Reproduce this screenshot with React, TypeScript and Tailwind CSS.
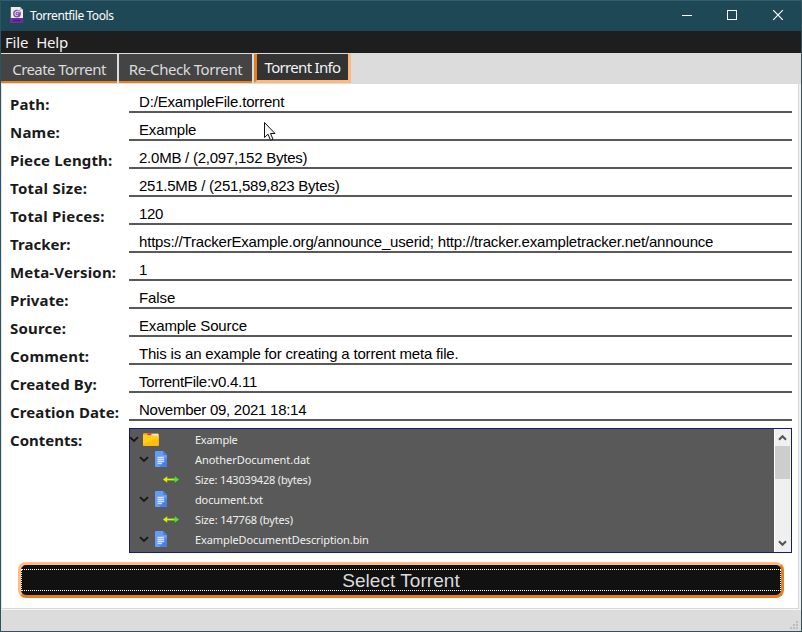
import React from "react";

const ui = "font-['Noto_Sans','Open_Sans',sans-serif]";
const arial = "font-['Liberation_Sans',Arial,sans-serif]";

const fields = [
  { label: "Path:", value: "D:/ExampleFile.torrent", ls: "tracking-[0.15px]", vs: "tracking-[-0.18px]" },
  { label: "Name:", value: "Example", ls: "tracking-[0.2px]", vs: "tracking-[-0.15px]" },
  { label: "Piece Length:", value: "2.0MB / (2,097,152 Bytes)", ls: "tracking-[0.15px]", vs: "tracking-[-0.24px]" },
  { label: "Total Size:", value: "251.5MB / (251,589,823 Bytes)", ls: "tracking-[0.27px]", vs: "tracking-[-0.25px]" },
  { label: "Total Pieces:", value: "120", ls: "tracking-[0.2px]", vs: "tracking-[-0.3px]" },
  { label: "Tracker:", value: "https://TrackerExample.org/announce_userid; http://tracker.exampletracker.net/announce", ls: "tracking-[0.05px]", vs: "tracking-[-0.19px]" },
  { label: "Meta-Version:", value: "1", ls: "tracking-[0.18px]", vs: "tracking-[0px]" },
  { label: "Private:", value: "False", ls: "tracking-[0.12px]", vs: "tracking-[-0.1px]" },
  { label: "Source:", value: "Example Source", ls: "tracking-[0.2px]", vs: "tracking-[-0.15px]" },
  { label: "Comment:", value: "This is an example for creating a torrent meta file.", ls: "tracking-[0.2px]", vs: "tracking-[-0.19px]" },
  { label: "Created By:", value: "TorrentFile:v0.4.11", ls: "tracking-[0.12px]", vs: "tracking-[-0.27px]" },
  { label: "Creation Date:", value: "November 09, 2021 18:14", ls: "tracking-[0.1px]", vs: "tracking-[-0.27px]" },
];

const tree = [
  { kind: "folder", text: "Example", ts: "tracking-[-0.25px]" },
  { kind: "file", text: "AnotherDocument.dat", ts: "tracking-[-0.05px]" },
  { kind: "size", text: "Size: 143039428 (bytes)", ts: "tracking-[-0.17px]" },
  { kind: "file", text: "document.txt", ts: "tracking-[-0.14px]" },
  { kind: "size", text: "Size: 147768 (bytes)", ts: "tracking-[-0.15px]" },
  { kind: "file", text: "ExampleDocumentDescription.bin", ts: "tracking-[-0.1px]" },
];

function AppIcon() {
  return (
    <svg width="14" height="17" viewBox="0 0 14 17" className="block">
      <path d="M0.8 0H10L13 3V16H0.8Z" fill="#f1ede6" />
      <path d="M10 0L13 3H10Z" fill="#c9c4cf" />
      <circle cx="7" cy="6.6" r="3.9" fill="#7a52a8" />
      <path d="M9.8 5.2C8.5 3.4 5.6 4.1 5 6.2C4.7 8.2 6.5 9.2 7.8 8.4" fill="none" stroke="#e3d8ee" strokeWidth="1.1" />
      <circle cx="7.5" cy="6.5" r="1" fill="#cdb9e0" />
      <rect x="0.2" y="11" width="13" height="5" fill="#6c2fa0" />
      <path d="M3 13.5H10.5" stroke="#471c73" strokeWidth="1.2" />
    </svg>
  );
}

function TreeChevron() {
  return (
    <svg width="10" height="7" viewBox="0 0 10 7" className="block shrink-0">
      <path d="M1 1.2L5 5L9 1.2" fill="none" stroke="#161616" strokeWidth="1.8" />
    </svg>
  );
}

function FolderIcon() {
  return (
    <svg width="16" height="13" viewBox="0 0 16 13" className="block">
      <path d="M0 1.2Q0 0.3 1 0.3H5L6 1H15Q16 1 16 2V12Q16 12.7 15 12.7H1Q0 12.7 0 12Z" fill="#ffb400" />
      <path d="M5 0.6H15.2V7H5Z" fill="#f9e6c6" />
      <path d="M4 0.6H8.4V2.4H5Z" fill="#ee2255" />
      <path d="M0 2H4.6L6 2.4H14.6V12.7H1Q0 12.7 0 12Z" fill="#ffcf1a" />
      <path d="M0 11L14.6 5H16V12Q16 12.7 15 12.7H1Q0 12.7 0 12Z" fill="#ffb50c" opacity="0.7" />
    </svg>
  );
}

function FileIcon() {
  return (
    <svg width="12" height="16" viewBox="0 0 12 16" className="block">
      <path d="M1 0H8L12 4V15Q12 16 11 16H1Q0 16 0 15V1Q0 0 1 0Z" fill="#659cf6" />
      <path d="M8 0L12 4H9Q8 4 8 3Z" fill="#4a7fe0" />
      <path d="M9.3 6L12 8.5V15Q12 16 11 16H6L2.7 13Z" fill="#4a80e6" />
      <path d="M2.5 6.5H9.3M2.5 8.5H9.3M2.5 10.5H9.3M2.5 12.5H7" stroke="#d3e2ff" strokeWidth="1.4" />
    </svg>
  );
}

function SizeIcon() {
  return (
    <svg width="16" height="7" viewBox="0 0 16 7" className="block">
      <path d="M2 3.5H11" stroke="#cdf500" strokeWidth="1.8" />
      <path d="M10 3.5H14" stroke="#7cf020" strokeWidth="1.8" />
      <path d="M0 3.5L4.2 0.3V6.7Z" fill="#d2f200" />
      <path d="M16 3.5L11.8 0.3V6.7Z" fill="#4be62a" />
    </svg>
  );
}

function TreeRow({ kind, text, ts }: { kind: string; text: string; ts: string }) {
  return (
    <div className="flex h-5 items-center">
      {kind === "folder" && (
        <div className="flex w-[65px] items-center gap-[3px]">
          <div className="-mt-[2px] -ml-px"><TreeChevron /></div>
          <div className="-mt-[2px] ml-[1px]"><FolderIcon /></div>
        </div>
      )}
      {kind === "file" && (
        <div className="flex w-[65px] items-center gap-[5px] pl-[9px]">
          <div className="-mt-[2px]"><TreeChevron /></div>
          <div className="-mt-[2px] ml-px"><FileIcon /></div>
        </div>
      )}
      {kind === "size" && (
        <div className="-mt-[2px] flex w-[65px] items-center pl-[33px]">
          <SizeIcon />
        </div>
      )}
      <span className={`text-[11px] leading-5 text-[#f0f0f0] ${ts}`}>{text}</span>
    </div>
  );
}

export default function App() {
  return (
    <div className={`relative flex h-[632px] w-[802px] flex-col overflow-hidden border border-t-[#315c69] border-r-[#35535c] border-b-[#35535c] border-l-[#2b5364] bg-[#dcdcdc] ${ui}`}>
      <header className="flex h-[30px] shrink-0 items-center bg-[#1f4856] pl-[9px]">
        <div className="-mt-[2px]"><AppIcon /></div>
        <span className="ml-[6px] text-[12px] leading-[30px] tracking-[-0.42px] text-white">Torrentfile Tools</span>
        <div className="ml-auto flex items-center">
          <svg width="120" height="30" viewBox="0 0 120 30" className="block" fill="none" stroke="#ffffff">
            <path d="M1 14.5H11M46.5 9.5H55.5V18.5H46.5Z" shapeRendering="crispEdges" />
            <path d="M92.2 9.2L101.8 18.8M101.8 9.2L92.2 18.8" strokeWidth="1.2" />
          </svg>
        </div>
      </header>

      <nav className="flex h-[22px] shrink-0 items-center gap-[8px] bg-[#1e1e1e] pl-[4px] text-[15px] leading-[22px] text-[#f2f2f2]">
        <span className="tracking-[-0.2px]">File</span>
        <span className="tracking-[-0.2px]">Help</span>
      </nav>

      <div className="flex h-[31px] shrink-0 items-start pt-px text-[15px]">
        <div className="mr-[2px] h-[29px] w-[116px] border-b-2 border-[#e67e22] bg-[#444444] text-center leading-[30px] text-[#dcdcdc]">
          <span className="tracking-[-0.58px]">Create Torrent</span>
        </div>
        <div className="mr-[2px] h-[29px] w-[133px] border-b-2 border-[#e67e22] bg-[#444444] text-center leading-[30px] text-[#dcdcdc]">
          <span className="tracking-[-0.45px]">Re-Check Torrent</span>
        </div>
        <div className="h-[29px] w-[97px] border-3 border-t-0 border-[#ffb87a] border-l-[#e67e22] bg-[#333333] text-center leading-[27px] text-[#f4f4f4]">
          <span className="tracking-[-0.68px]">Torrent Info</span>
        </div>
      </div>

      <div className="shrink-0 bg-[#f0f0f0] pr-[2px]">
        <main className="flex h-[525px] flex-col border-r border-b border-l border-r-[#d8d8d8] border-b-[#d8d8d8] border-l-[#e6e6e6] bg-white pt-px">
          {fields.map((f) => (
            <div key={f.label} className="flex h-7 shrink-0 pl-2">
              <div className="w-[119px] pt-[8px] text-[15px] leading-[22px] font-bold whitespace-nowrap text-[#1a1a1a]">
                <span className={f.ls}>{f.label}</span>
              </div>
              <div className={`h-7 w-[663px] border-b-2 border-[#595959] pl-[10px] text-[15px] leading-[33px] whitespace-nowrap text-black ${arial}`}>
                <span className={f.vs}>{f.value}</span>
              </div>
            </div>
          ))}
          <div className="flex h-[140px] shrink-0 pl-2">
            <div className="w-[119px] pt-[8px] text-[15px] leading-[22px] font-bold text-[#1a1a1a]">Contents:</div>
            <div className="mt-[7px] flex h-[125px] w-[663px] border border-[#19196e] bg-[#595959]">
              <div className="flex-1 overflow-hidden pt-px">
                {tree.map((t) => (
                  <TreeRow key={t.text} kind={t.kind} text={t.text} ts={t.ts} />
                ))}
              </div>
              <div className="flex w-[17px] flex-col items-center border-l border-white bg-[#f0f0f0]">
                <svg width="16" height="17" viewBox="0 0 16 17" className="block shrink-0">
                  <path d="M4 10.8L7.5 7.3L11 10.8" fill="none" stroke="#555555" strokeWidth="2.1" />
                </svg>
                <div className="h-[33px] w-[15px] self-start bg-[#cdcdcd]" />
                <svg width="16" height="17" viewBox="0 0 16 17" className="mt-auto block shrink-0">
                  <path d="M4 6.3L7.5 9.8L11 6.3" fill="none" stroke="#555555" strokeWidth="2.1" />
                </svg>
              </div>
            </div>
          </div>
          <button className="mt-px ml-4 flex h-9 w-[766px] shrink-0 flex-col justify-center rounded-[8px] border-3 border-t-[#ffbb80] border-r-[#e67e22] border-b-[#e67e22] border-l-[#ffbb80] bg-[#111111]">
            <div className={`h-[22px] w-full border border-dotted border-white text-center text-[19px] leading-[22px] text-[#dcdcdc] ${arial}`}>
              <span className="tracking-[0.05px]">Select Torrent</span>
            </div>
          </button>
        </main>
      </div>

      <footer className="flex flex-1 items-end justify-end border-t border-[#f4f4f4] bg-[#dcdcdc] pr-[3px] pb-[2px]">
        <svg width="8" height="8" viewBox="0 0 8 8" className="block" fill="#bdbdbd" shapeRendering="crispEdges">
          <path d="M6 0H8V2H6ZM3 3H5V5H3ZM6 3H8V5H6ZM0 6H2V8H0ZM3 6H5V8H3ZM6 6H8V8H6Z" />
        </svg>
      </footer>

      <svg width="12" height="20" viewBox="0 0 12 20" className="absolute top-[121px] left-[263px]">
        <path d="M0.5 0.5V15.5L4 12.2L6.5 18.2L9 17.2L6.5 11.5H11Z" fill="#f4f4f4" stroke="#111111" />
      </svg>
    </div>
  );
}
